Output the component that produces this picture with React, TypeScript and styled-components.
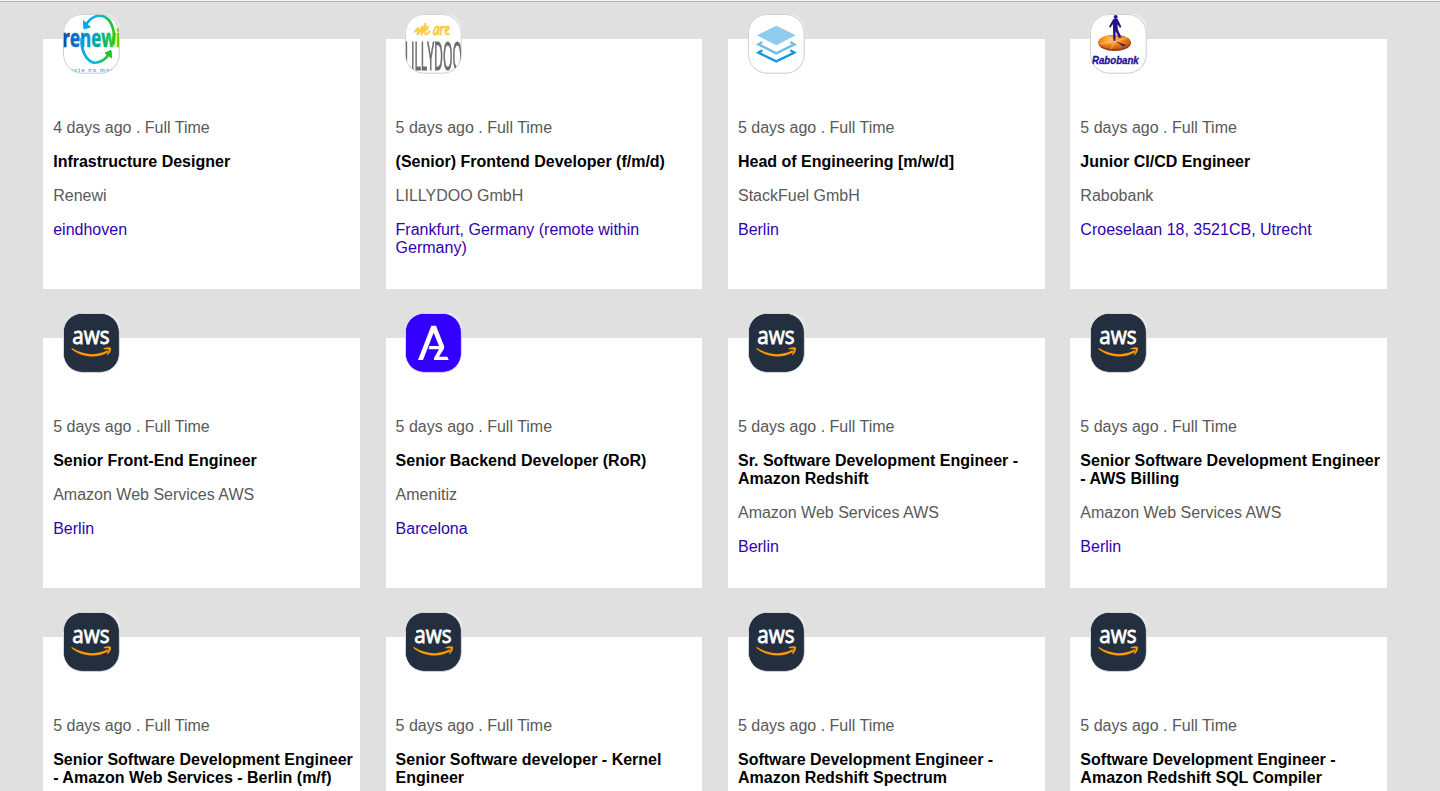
import React from "react";
import styled, { createGlobalStyle } from "styled-components";

const GlobalStyle = createGlobalStyle`
  body {
    margin: 0;
    background: #e0e0e0;
    font-family: "Liberation Sans", Arial, Helvetica, sans-serif;
    font-size: 16px;
    line-height: 18px;
  }
`;

const Page = styled.main`
  box-sizing: border-box;
  height: 791px;
  overflow: hidden;
  border-top: 1px solid #f4f4f4;
`;

const TopRule = styled.div`
  height: 1px;
  background: #aeb3b0;
`;

const JobGrid = styled.section`
  display: grid;
  grid-template-columns: repeat(4, 22vw);
  column-gap: 25.6px;
  row-gap: 49px;
  padding: 37px 0 0 3vw;
`;

const Card = styled.article`
  box-sizing: border-box;
  display: flex;
  flex-direction: column;
  align-items: flex-start;
  gap: 16px;
  height: 250px;
  padding: 0 0 0 10px;
  background: #fff;
`;

const LogoFrame = styled.div`
  box-sizing: border-box;
  width: 57px;
  height: 60px;
  margin: -25px 0 29px 9.8px;
  border-radius: 20px 15px 20px 20px;
  overflow: hidden;
  background: #ececec;
`;

const LogoArt = styled.svg`
  display: block;
  width: 57px;
  height: 60px;
`;

const Text = styled.p<{ $tone: "muted" | "link" }>`
  margin: 0;
  color: ${({ $tone }) => ($tone === "link" ? "#3300b0" : "#595959")};
`;

const Title = styled.h2`
  margin: 0;
  font-size: 16px;
  font-weight: 700;
  line-height: 18px;
  color: #000;
`;

type Brand = "renewi" | "lillydoo" | "stackfuel" | "rabobank" | "aws" | "amenitiz";

const Plate = ({ fill, stroke }: { fill: string; stroke: string }) => (
  <rect x="1.5" y="1.5" width="167" height="176" rx="56" fill={fill} stroke={stroke} strokeWidth="3" />
);

const Renewi = () => (
  <>
    <defs>
      <linearGradient id="word" x1="0" x2="1">
        <stop offset="0" stopColor="#0b4bb0" />
        <stop offset=".45" stopColor="#0796dc" />
        <stop offset=".72" stopColor="#06b96c" />
        <stop offset="1" stopColor="#72d000" />
      </linearGradient>
      <linearGradient id="ring" x1="0" x2="1">
        <stop offset="0" stopColor="#0a9fe8" />
        <stop offset=".45" stopColor="#08bce0" />
        <stop offset="1" stopColor="#2bc81c" />
      </linearGradient>
      <clipPath id="renewiClip">
        <rect x="2" y="2" width="166" height="175" rx="55" />
      </clipPath>
    </defs>
    <Plate fill="#fff" stroke="#cfcfcf" />
    <g clipPath="url(#renewiClip)">
      <text x="-2" y="98" textLength="176" lengthAdjust="spacingAndGlyphs" fill="url(#word)" stroke="url(#word)" strokeWidth="2" fontFamily="Open Sans" fontWeight="700" fontSize="74">renewi</text>
      <path d="M68 34C82 11 105-2 126 9C150 22 158 63 151 91" fill="none" stroke="url(#ring)" strokeWidth="8" />
      <path d="M56 72C53 117 77 153 105 145C121 141 131 132 138 119" fill="none" stroke="url(#ring)" strokeWidth="8" />
      <path d="M61 20L63 45L82 39Z" fill="#08a9e8" stroke="#08a9e8" strokeWidth="3" />
      <path d="M126 117L144 109L146 132Z" fill="#21c426" stroke="#21c426" strokeWidth="3" />
      <text x="21" y="175" textLength="128" lengthAdjust="spacing" fill="#3ca4d4" fontFamily="Open Sans" fontWeight="600" fontSize="16">aste no mor</text>
    </g>
  </>
);

const Lillydoo = () => (
  <>
    <defs>
      <clipPath id="lillyClip">
        <rect x="2" y="2" width="166" height="175" rx="55" />
      </clipPath>
      <filter id="soft"><feGaussianBlur stdDeviation="1.6" /></filter>
    </defs>
    <Plate fill="#fff" stroke="#d4d4d4" />
    <g clipPath="url(#lillyClip)">
      <g filter="url(#soft)">
        <g fill="none" stroke="#fbcb48" strokeWidth="6" strokeLinecap="round" strokeLinejoin="round">
          <path d="M30 53L40 42L38 61L52 38L49 62L62 29M58 50C68 49 73 38 65 38C56 39 54 65 66 60L74 52" />
          <path d="M101 39C89 35 81 60 89 62C96 62 101 42 101 39L98 61M108 38L106 62M107 51C111 38 117 35 121 41M122 51C132 48 135 36 127 38C119 43 119 65 130 60" />
        </g>
        <circle cx="134" cy="61" r="2" fill="#fbcb48" />
        <text transform="translate(-1 167) scale(1 2.25)" x="0" y="0" textLength="172" lengthAdjust="spacingAndGlyphs" fill="#6a6a6a" stroke="#6a6a6a" strokeWidth="1.5" fontFamily="Open Sans" fontSize="50">LILLYDOO</text>
      </g>
    </g>
  </>
);

const StackFuel = () => (
  <>
    <Plate fill="#fff" stroke="#cfcfcf" />
    <path d="M27 64L85 35L143 64L85 94Z" fill="#8ecbef" />
    <path d="M43 84L31 91L85 118L139 91L127 84" fill="none" stroke="#70bde9" strokeWidth="7" />
    <path d="M43 109L31 116L85 142L139 116L127 109" fill="none" stroke="#159ade" strokeWidth="7" />
  </>
);

const Rabobank = () => (
  <>
    <defs>
      <radialGradient id="dial" cx=".4" cy=".35" r=".75">
        <stop offset="0" stopColor="#ffc270" />
        <stop offset=".45" stopColor="#f48a18" />
        <stop offset="1" stopColor="#b8480c" />
      </radialGradient>
    </defs>
    <Plate fill="#fff" stroke="#cfcfcf" />
    <ellipse cx="74" cy="87" rx="49" ry="24" fill="#87401c" />
    <ellipse cx="73" cy="84" rx="48" ry="22" fill="url(#dial)" />
    <path d="M75 82L29 90M75 82L50 65M75 82L112 71M75 82L106 99M75 82L63 105" stroke="#ffd08e" strokeWidth="2" />
    <path d="M76 82L109 93L101 99Z" fill="#542069" />
    <circle cx="77" cy="9" r="6" fill="#28108e" />
    <path d="M70 15L83 15L94 38L90 42L83 31L83 45L94 70L87 72L77 52L76 80L70 80L69 42L69 30L61 41L57 38Z" fill="#28108e" />
    <text x="6" y="149" textLength="140" lengthAdjust="spacingAndGlyphs" fill="#24109a" stroke="#24109a" strokeWidth="1" fontFamily="Liberation Sans" fontWeight="700" fontStyle="italic" fontSize="31">Rabobank</text>
  </>
);

const Aws = () => (
  <>
    <Plate fill="#232f3f" stroke="#d5d8dc" />
    <rect x="3" y="3" width="164" height="173" rx="54" fill="#232f3f" />
    <text x="28" y="94" textLength="112" lengthAdjust="spacingAndGlyphs" fill="#fff" stroke="#fff" strokeWidth="2.4" fontFamily="Open Sans" fontWeight="400" fontSize="70">aws</text>
    <path d="M27 105C60 126 102 130 133 112L136 118C103 138 57 134 26 109Q24 104 27 105Z" fill="#ff9900" />
    <path d="M122 106Q136 100 144 104Q145 116 134 127L132 125Q138 114 137 109Q130 108 122 109Z" fill="#ff9900" />
  </>
);

const Amenitiz = () => (
  <>
    <Plate fill="#3300ff" stroke="#d7d2f7" />
    <rect x="3" y="3" width="164" height="173" rx="54" fill="#3300ff" />
    <path d="M39 141L79 38H93L118 101H103L86 59L54 141Z" fill="#fff" />
    <path d="M73 99H117V107L102 131H127L131 141H87V135L102 109H71Z" fill="#fff" />
  </>
);

const artwork: Record<Brand, () => React.ReactElement> = {
  renewi: Renewi,
  lillydoo: Lillydoo,
  stackfuel: StackFuel,
  rabobank: Rabobank,
  aws: Aws,
  amenitiz: Amenitiz,
};

interface Job {
  brand: Brand;
  age: string;
  title: string;
  company: string;
  location: string;
}

const AWS = "Amazon Web Services AWS";

const jobs: Job[] = [
  { brand: "renewi", age: "4 days ago", title: "Infrastructure Designer", company: "Renewi", location: "eindhoven" },
  { brand: "lillydoo", age: "5 days ago", title: "(Senior) Frontend Developer (f/m/d)", company: "LILLYDOO GmbH", location: "Frankfurt, Germany (remote within Germany)" },
  { brand: "stackfuel", age: "5 days ago", title: "Head of Engineering [m/w/d]", company: "StackFuel GmbH", location: "Berlin" },
  { brand: "rabobank", age: "5 days ago", title: "Junior CI/CD Engineer", company: "Rabobank", location: "Croeselaan 18, 3521CB, Utrecht" },
  { brand: "aws", age: "5 days ago", title: "Senior Front-End Engineer", company: AWS, location: "Berlin" },
  { brand: "amenitiz", age: "5 days ago", title: "Senior Backend Developer (RoR)", company: "Amenitiz", location: "Barcelona" },
  { brand: "aws", age: "5 days ago", title: "Sr. Software Development Engineer - Amazon Redshift", company: AWS, location: "Berlin" },
  { brand: "aws", age: "5 days ago", title: "Senior Software Development Engineer - AWS Billing", company: AWS, location: "Berlin" },
  { brand: "aws", age: "5 days ago", title: "Senior Software Development Engineer - Amazon Web Services - Berlin (m/f)", company: AWS, location: "Berlin" },
  { brand: "aws", age: "5 days ago", title: "Senior Software developer - Kernel Engineer", company: AWS, location: "Berlin" },
  { brand: "aws", age: "5 days ago", title: "Software Development Engineer - Amazon Redshift Spectrum", company: AWS, location: "Berlin" },
  { brand: "aws", age: "5 days ago", title: "Software Development Engineer - Amazon Redshift SQL Compiler", company: AWS, location: "Berlin" },
];

const JobCard = ({ job }: { job: Job }) => {
  const Art = artwork[job.brand];
  return (
    <Card>
      <LogoFrame>
        <LogoArt viewBox="0 0 171 180" aria-label={job.company}>
          <Art />
        </LogoArt>
      </LogoFrame>
      <Text $tone="muted">{job.age} . Full Time</Text>
      <Title>{job.title}</Title>
      <Text $tone="muted">{job.company}</Text>
      <Text $tone="link">{job.location}</Text>
    </Card>
  );
};

export default function App() {
  return (
    <Page>
      <GlobalStyle />
      <TopRule />
      <JobGrid>
        {jobs.map((job) => (
          <JobCard key={job.title} job={job} />
        ))}
      </JobGrid>
    </Page>
  );
}
